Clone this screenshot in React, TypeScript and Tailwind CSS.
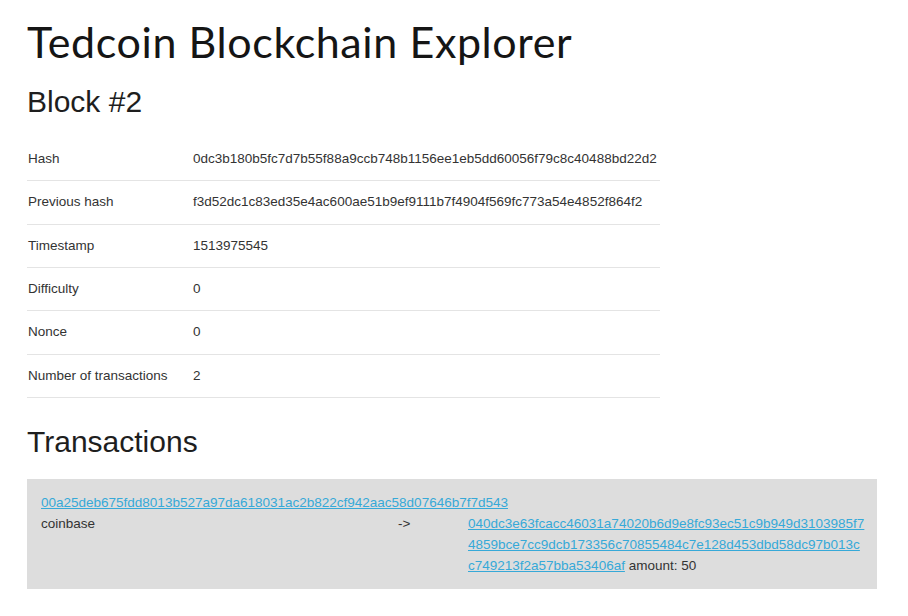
import React from "react";

const rows: [string, string][] = [
  ["Hash", "0dc3b180b5fc7d7b55f88a9ccb748b1156ee1eb5dd60056f79c8c40488bd22d2"],
  ["Previous hash", "f3d52dc1c83ed35e4ac600ae51b9ef9111b7f4904f569fc773a54e4852f864f2"],
  ["Timestamp", "1513975545"],
  ["Difficulty", "0"],
  ["Nonce", "0"],
  ["Number of transactions", "2"],
];

function App() {
  return (
    <div className="min-h-[616px] bg-white pl-[27px] pr-[31px] text-[#333] font-['Liberation_Sans',Arial,sans-serif]">
      <h1 className="pt-[20px] text-[43px] leading-none tracking-[0.6px] text-[#151515] font-['Lato',sans-serif]">
        Tedcoin Blockchain Explorer
      </h1>
      <h2 className="mt-[24px] text-[30px] leading-none text-[#1e1e1e]">Block #2</h2>

      <div className="mt-[21px] w-[633px] text-[13.5px]">
        {rows.map(([label, value]) => (
          <div
            key={label}
            className="flex h-[43.33px] items-center border-b border-[#e4e4e4]"
          >
            <div className="w-[166px] pl-px">{label}</div>
            <div className="whitespace-nowrap">{value}</div>
          </div>
        ))}
      </div>

      <h2 className="mt-[29px] text-[30px] leading-none text-[#1e1e1e]">Transactions</h2>

      <div className="mt-[22px] h-[110px] bg-[#dddddd] pl-[14px] pt-[13px] text-[13.5px] leading-[21px]">
        <a href="#" className="text-[#36a9d8] underline">
          00a25deb675fdd8013b527a97da618031ac2b822cf942aac58d07646b7f7d543
        </a>
        <div className="flex">
          <div className="w-[357px]">coinbase</div>
          <div className="w-[70px]">-&gt;</div>
          <div className="whitespace-nowrap">
            <a href="#" className="text-[#36a9d8] underline">
              040dc3e63fcacc46031a74020b6d9e8fc93ec51c9b949d3103985f7
              <br />
              4859bce7cc9dcb173356c70855484c7e128d453dbd58dc97b013c
              <br />
              c749213f2a57bba53406af
            </a>{" "}
            amount: 50
          </div>
        </div>
      </div>
    </div>
  );
}

export default App;
